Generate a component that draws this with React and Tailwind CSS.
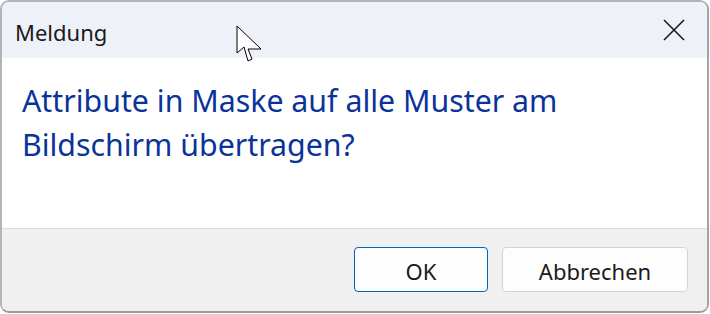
import React from "react";

export default function App() {
  return (
    <div
      className="relative w-[710px] h-[314px] bg-white overflow-hidden"
      style={{ fontFamily: '"Segoe UI", "Noto Sans", "Open Sans", sans-serif' }}
    >
      <div className="flex flex-col w-[709px] h-[313px] rounded-[9px] border-2 border-[#b4b4b4] border-b-[#9c9c9c] border-r-[#a4a4a4] overflow-hidden">
        <div className="flex items-center justify-between h-[56px] bg-[#eef2f8] pl-[13px] pr-[22px]">
          <span className="text-[22px] text-[#1a1a1a] leading-none mt-[3px]">Meldung</span>
          <svg width="22" height="22" viewBox="0 0 22 22" className="text-[#1a1a1a]">
            <path d="M1 1 L21 21 M21 1 L1 21" stroke="currentColor" strokeWidth="1.6" fill="none" />
          </svg>
        </div>
        <div className="flex-1 bg-white pl-[20px] pt-[21px]">
          <p className="text-[30.3px] leading-[44px] text-[#0a3399]">
            Attribute in Maske auf alle Muster am
            <br />
            Bildschirm übertragen?
          </p>
        </div>
        <div className="h-[83px] bg-[#f0f0f0] border-t border-[#dcdcdc] flex items-start justify-end gap-[14px] pt-[18px] pr-[19px]">
          <button className="w-[134px] h-[45px] rounded-[4px] border border-[#0067c0] bg-[#fdfdfd] text-[22px] text-[#1a1a1a] pt-[3px]">
            OK
          </button>
          <button className="w-[186px] h-[45px] rounded-[4px] border border-[#d4d4d4] bg-[#fdfdfd] text-[22px] text-[#1a1a1a] pt-[3px]">
            Abbrechen
          </button>
        </div>
      </div>
      <svg
        className="absolute left-[236px] top-[25px]"
        width="28"
        height="38"
        viewBox="-1 -1 28 38"
      >
        <path
          d="M0 0 L0 27 L7 21 L11 35 L15 33 L11 23 L24 23 Z"
          fill="white"
          stroke="black"
          strokeWidth="1"
          strokeLinejoin="miter"
        />
      </svg>
    </div>
  );
}
